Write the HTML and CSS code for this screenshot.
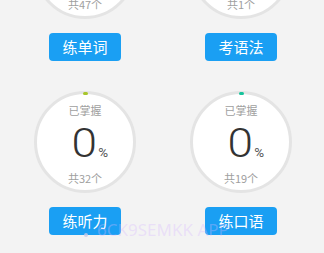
FILE: index.html
```html
<!DOCTYPE html>
<html>
<head>
<meta charset="utf-8">
<link rel="stylesheet" href="styles.css">
</head>
<body>
<div class="grid">
  <div class="cell">
    <div class="ring">
      <span class="dot dot-green"></span>
      <div class="label">已掌握</div>
      <div class="num">0<span class="pct">%</span></div>
      <div class="label total">共47个</div>
    </div>
    <div class="btn">练单词</div>
  </div>
  <div class="cell">
    <div class="ring">
      <span class="dot dot-teal"></span>
      <div class="label">已掌握</div>
      <div class="num">0<span class="pct">%</span></div>
      <div class="label total">共1个</div>
    </div>
    <div class="btn">考语法</div>
  </div>
  <div class="cell">
    <div class="ring">
      <span class="dot dot-green"></span>
      <div class="label">已掌握</div>
      <div class="num">0<span class="pct">%</span></div>
      <div class="label total">共32个</div>
    </div>
    <div class="btn">练听力</div>
  </div>
  <div class="cell">
    <div class="ring">
      <span class="dot dot-teal"></span>
      <div class="label">已掌握</div>
      <div class="num">0<span class="pct">%</span></div>
      <div class="label total">共19个</div>
    </div>
    <div class="btn">练口语</div>
  </div>
</div>
<div class="watermark"><span class="wm-dot"></span>6CK9SEMKK APP</div>
</body>
</html>
```

FILE: styles.css
```css
html, body {
  margin: 0;
  padding: 0;
}
body {
  background: #f3f3f3;
  width: 324px;
  height: 253px;
  overflow: hidden;
  position: relative;
  font-family: "Noto Sans CJK SC", "Noto Sans", sans-serif;
}
.grid {
  display: grid;
  grid-template-columns: 156px 156px;
  padding: 0 5px 0 7px;
  margin-top: -83px;
  row-gap: 30px;
}
.cell {
  display: flex;
  flex-direction: column;
  align-items: center;
}
.ring {
  position: relative;
  box-sizing: border-box;
  width: 102px;
  height: 102px;
  border-radius: 50%;
  border: 3px solid #e4e4e4;
  background: #ffffff;
  display: flex;
  flex-direction: column;
  align-items: center;
  padding-top: 9px;
}
.dot {
  position: absolute;
  top: -2px;
  left: 50%;
  width: 5px;
  height: 3px;
  margin-left: -2px;
  border-radius: 2px;
}
.dot-green { background: #a8c62c; }
.dot-teal { background: #17c39c; }
.label {
  font-size: 11px;
  line-height: 14px;
  color: #a0a0a0;
}
.num {
  font-family: Roboto, "Noto Sans", sans-serif;
  font-weight: 300;
  font-size: 41px;
  line-height: 40px;
  color: #333333;
  margin-top: 6px;
  padding-left: 8px;
  transform: scaleX(1.12);
}
.pct {
  font-size: 12px;
  font-weight: 400;
  color: #555555;
  margin-left: 1px;
}
.total {
  margin-top: -2px;
}
.btn {
  margin-top: 14px;
  width: 72px;
  height: 28px;
  border-radius: 4px;
  background: #1a9ff3;
  color: #ffffff;
  font-size: 15px;
  line-height: 28px;
  text-align: center;
}
.watermark {
  position: absolute;
  left: 84px;
  top: 220px;
  font-family: "Noto Sans", sans-serif;
  font-size: 17px;
  line-height: 20px;
  color: rgba(215, 185, 255, 0.35);
  white-space: nowrap;
  display: flex;
  align-items: center;
}
.wm-dot {
  width: 4px;
  height: 4px;
  border-radius: 50%;
  background: rgba(200, 200, 230, 0.8);
  margin-right: 9px;
  margin-top: 10px;
}
```
